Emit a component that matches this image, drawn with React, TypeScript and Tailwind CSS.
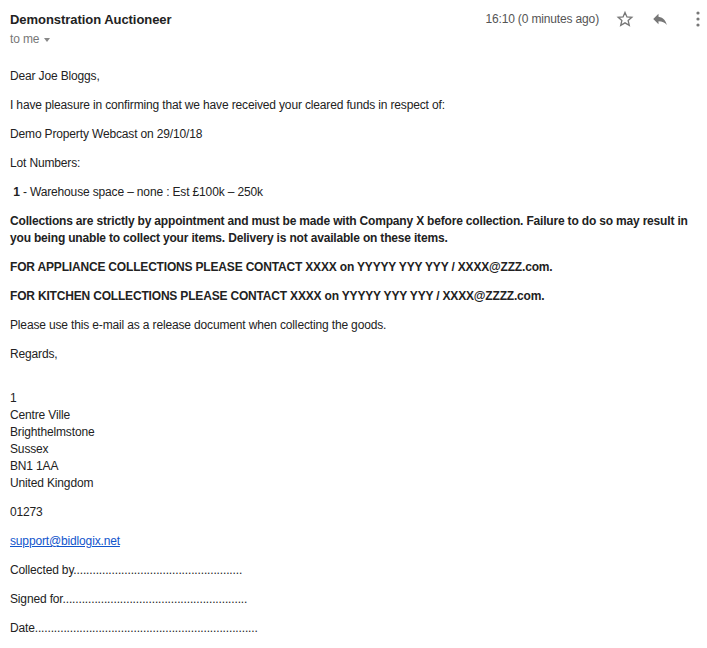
import React from 'react'

const font = { fontFamily: '"Liberation Sans", Arial, sans-serif' }

function Star() {
  return (
    <svg width="18" height="18" viewBox="0 0 24 24" fill="none" stroke="#777" strokeWidth="1.8" strokeLinejoin="miter">
      <path d="M12 3.2l2.6 6 6.5.6-4.9 4.3 1.5 6.4L12 17.1l-5.7 3.4 1.5-6.4-4.9-4.3 6.5-.6z" />
    </svg>
  )
}

function Reply() {
  return (
    <svg width="18" height="18" viewBox="0 0 24 24" fill="#777">
      <path d="M10 9V5l-7 7 7 7v-4.1c5 0 8.5 1.6 11 5.1-1-5-4-10-11-11z" />
    </svg>
  )
}

function Dots() {
  return (
    <svg width="6" height="18" viewBox="0 0 6 18" fill="#777">
      <circle cx="3" cy="3" r="1.6" />
      <circle cx="3" cy="9" r="1.6" />
      <circle cx="3" cy="15" r="1.6" />
    </svg>
  )
}

export default function App() {
  return (
    <div className="w-[707px] h-[648px] bg-white text-[#222] overflow-hidden" style={font}>
      {/* header */}
      <div className="flex items-start justify-between pl-[10px] pr-[6px] pt-[11px]">
        <div>
          <div className="text-[13px] font-bold leading-[17px] text-[#222] tracking-[-0.05px]">Demonstration Auctioneer</div>
          <div className="flex items-center gap-[5px] text-[12px] leading-[16px] text-[#777] mt-[3px] tracking-[-0.15px]">
            to me
            <span className="w-0 h-0 border-l-[3.5px] border-r-[3.5px] border-t-[4px] border-l-transparent border-r-transparent border-t-[#888] mt-[1px]" />
          </div>
        </div>
        <div className="flex items-center -mt-[1px]">
          <span className="text-[12px] text-[#555] leading-[18px] tracking-[-0.15px]">16:10 (0 minutes ago)</span>
          <span className="ml-[17px] flex items-center"><Star /></span>
          <span className="ml-[17px] flex items-center"><Reply /></span>
          <span className="ml-[26px] flex items-center"><Dots /></span>
        </div>
      </div>

      {/* body */}
      <div className="pl-[10px] pt-[21px] text-[12px] leading-[17px] tracking-[-0.15px] space-y-[12px]">
        <p>Dear Joe Bloggs,</p>
        <p>I have pleasure in confirming that we have received your cleared funds in respect of:</p>
        <p>Demo Property Webcast on 29/10/18</p>
        <p>Lot Numbers:</p>
        <p>
          &nbsp;<b>1</b> - Warehouse space – none : Est £100k – 250k
        </p>
        <p className="font-bold tracking-[-0.18px] pr-[8px]">
          Collections are strictly by appointment and must be made with Company X before collection. Failure to do so may result in you being unable to collect your items. Delivery is not available on these items.
        </p>
        <p className="font-bold tracking-[-0.18px]">FOR APPLIANCE COLLECTIONS PLEASE CONTACT XXXX on YYYYY YYY YYY / XXXX@ZZZ.com.</p>
        <p className="font-bold tracking-[-0.18px]">FOR KITCHEN COLLECTIONS PLEASE CONTACT XXXX on YYYYY YYY YYY / XXXX@ZZZZ.com.</p>
        <p>Please use this e-mail as a release document when collecting the goods.</p>
        <p>Regards,</p>
        <p className="!mt-[27px]">
          1<br />
          Centre Ville<br />
          Brighthelmstone<br />
          Sussex<br />
          BN1 1AA<br />
          United Kingdom
        </p>
        <p>01273</p>
        <p>
          <a className="text-[#15c] underline">support@bidlogix.net</a>
        </p>
        <p>Collected by.....................................................</p>
        <p>Signed for..........................................................</p>
        <p>Date......................................................................</p>
      </div>
    </div>
  )
}
